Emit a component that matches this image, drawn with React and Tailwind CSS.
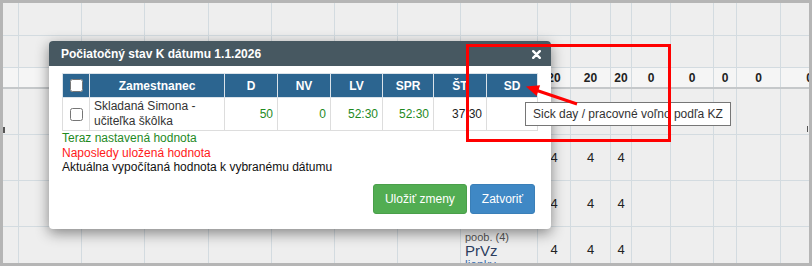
import React from 'react';

const FONT = "font-['Liberation_Sans',Arial,sans-serif]";

// widths of the background sheet columns (inner px)
const COLS = [
  'w-[16px]', 'w-[63px]', 'w-[63px]', 'w-[64px]', 'w-[63px]', 'w-[63px]', 'w-[63px]', 'w-[63px]',
  'w-[77px]', 'w-[33px]', 'w-[40px]', 'w-[21px]', 'w-[39px]', 'w-[43px]', 'w-[23px]', 'w-[44px]', 'w-[58px]',
];

const ROWS = [
  { h: 'h-[33px]', cells: {} },
  { h: 'h-[32px]', cells: {} },
  { h: 'h-[21px]', num: true, cells: { 9: '20', 10: '20', 11: '20', 12: '0', 13: '0', 14: '0', 15: '0', 16: '0' } },
  { h: 'h-[46px]', cells: {} },
  { h: 'h-[46px]', cells: { 9: '4', 10: '4', 11: '4' } },
  { h: 'h-[46px]', cells: { 9: '4', 10: '4', 11: '4' } },
  { h: 'h-[46px]', cells: { 9: '4', 10: '4', 11: '4' }, last: true },
];

const Sheet = () => (
  <div className="w-[806px] h-[260px] overflow-hidden bg-[#eeeeee]">
    {ROWS.map((row, ri) => (
      <div
        key={ri}
        className={`flex ${row.h} ${row.num ? 'bg-[#f5f5f5] border-b-2 border-[#c5c8ca]' : 'border-b border-[#d3dbe0]'}`}
      >
        {COLS.map((w, ci) => (
          <div key={ci} className={`${w} shrink-0 h-full border-r border-[#d3dbe0] flex items-center justify-center`}>
            {row.cells[ci] && (
              <span className={row.num ? 'font-bold text-[12px] text-[#222]' : 'text-[13px] text-[#222]'}>
                {row.cells[ci]}
              </span>
            )}
            {row.last && ci === 7 && <div className="mt-[32px] mr-[44px] w-[6px] h-[2px] bg-[#222]" />}
            {row.last && ci === 8 && (
              <div className="w-full h-full flex flex-col pl-[4px] pt-[4px]">
                <span className="text-[11px] leading-[12px] text-[#555]">poob. (4)</span>
                <span className="text-[15px] leading-[15px] text-[#2c3d5e]">PrVz</span>
                <span className="text-[12px] leading-[14px] text-[#3a6fb0]">lienky</span>
              </div>
            )}
          </div>
        ))}
      </div>
    ))}
  </div>
);

const Modal = () => (
  <div className="absolute left-[49px] top-[41px] w-[502px] h-[188px] bg-white rounded-[4px] overflow-hidden shadow-[0_4px_14px_rgba(0,0,0,0.45)]">
    <div className="h-[25px] bg-[#475861] flex items-center justify-between pl-[12px] pr-[10px]">
      <span className="text-white font-bold text-[12px]">Počiatočný stav K dátumu 1.1.2026</span>
      <svg width="9" height="9" viewBox="0 0 9 9" className="mt-[1px]">
        <path d="M1.2 1.2 L7.8 7.8 M7.8 1.2 L1.2 7.8" stroke="#ffffff" strokeWidth="2.4" strokeLinecap="round" />
      </svg>
    </div>

    <div className="pl-[13px] pr-[14px] pt-[7px]">
      <table className="table-fixed border-collapse w-[475px]">
        <colgroup>
          <col className="w-[27px]" />
          <col className="w-[135px]" />
          <col className="w-[53px]" />
          <col className="w-[53px]" />
          <col className="w-[52px]" />
          <col className="w-[51px]" />
          <col className="w-[53px]" />
          <col className="w-[51px]" />
        </colgroup>
        <thead>
          <tr className="h-[24px] bg-[#2c6590] text-white text-[12px] font-bold">
            <th className="border border-[#dbe3ea] p-0">
              <div className="flex justify-center items-center">
                <input type="checkbox" className="w-[13px] h-[13px] m-0" readOnly />
              </div>
            </th>
            {['Zamestnanec', 'D', 'NV', 'LV', 'SPR', 'ŠT', 'SD'].map((h) => (
              <th key={h} className="border border-[#dbe3ea] p-0 text-center">{h}</th>
            ))}
          </tr>
        </thead>
        <tbody>
          <tr className="h-[33px] text-[12px]">
            <td className="border border-[#dddddd] p-0">
              <div className="flex justify-center items-center">
                <input type="checkbox" className="w-[13px] h-[13px] m-0" readOnly />
              </div>
            </td>
            <td className="border border-[#dddddd] px-[4px] py-0 leading-[15px] text-[#333]">
              Skladaná Simona - učiteľka škôlka
            </td>
            <td className="border border-[#dddddd] pr-[4px] text-right text-[#1f8a1f]">50</td>
            <td className="border border-[#dddddd] pr-[4px] text-right text-[#1f8a1f]">0</td>
            <td className="border border-[#dddddd] pr-[4px] text-right text-[#1f8a1f]">52:30</td>
            <td className="border border-[#dddddd] pr-[4px] text-right text-[#1f8a1f]">52:30</td>
            <td className="border border-[#dddddd] pr-[4px] text-right text-[#222]">37:30</td>
            <td className="border border-[#dddddd]"></td>
          </tr>
        </tbody>
      </table>

      <div className="text-[12px] leading-[14.5px]">
        <div className="text-[#1f8a1f]">Teraz nastavená hodnota</div>
        <div className="text-[#ff1a1a]">Naposledy uložená hodnota</div>
        <div className="text-[#111]">Aktuálna vypočítaná hodnota k vybranému dátumu</div>
      </div>

      <div className="flex justify-end gap-[3px] mt-[9px] pr-[2px]">
        <button className="h-[30px] px-[11px] rounded-[3px] border border-[#4a9f4a] bg-[#52ad52] text-white text-[12px]">
          Uložiť zmeny
        </button>
        <button className="h-[30px] px-[11px] rounded-[3px] border border-[#3a7fb8] bg-[#3f88c5] text-white text-[12px]">
          Zatvoriť
        </button>
      </div>
    </div>
  </div>
);

export default function App() {
  return (
    <div className={`relative w-[812px] h-[266px] bg-[#b5b5b5] p-[3px] ${FONT}`}>
      <Sheet />
      <Modal />

      {/* small grips on the sheet edges */}
      <span className="absolute left-[3px] top-[127px] w-[2px] h-[6px] bg-[#555]" />
      <span className="absolute left-[807px] top-[126px] w-[1px] h-[6px] bg-[#555]" />

      {/* tooltip */}
      <div className="absolute left-[525px] top-[102px] h-[24px] px-[7px] flex items-center whitespace-nowrap bg-white border border-[#767676] text-[12px] text-[#333]">
        Sick day / pracovné voľno podľa KZ
      </div>

      {/* annotation arrow */}
      <svg className="absolute left-0 top-0 pointer-events-none" width="812" height="266">
        <line x1="577" y1="104" x2="537" y2="90.5" stroke="#ff0000" strokeWidth="3" />
        <polygon points="526,86.5 540.1,85.2 536.6,95.9" fill="#ff0000" />
      </svg>

      {/* annotation box */}
      <div className="absolute left-[466px] top-[44px] w-[205px] h-[98px] border-[3px] border-[#ff0000]" />
    </div>
  );
}
